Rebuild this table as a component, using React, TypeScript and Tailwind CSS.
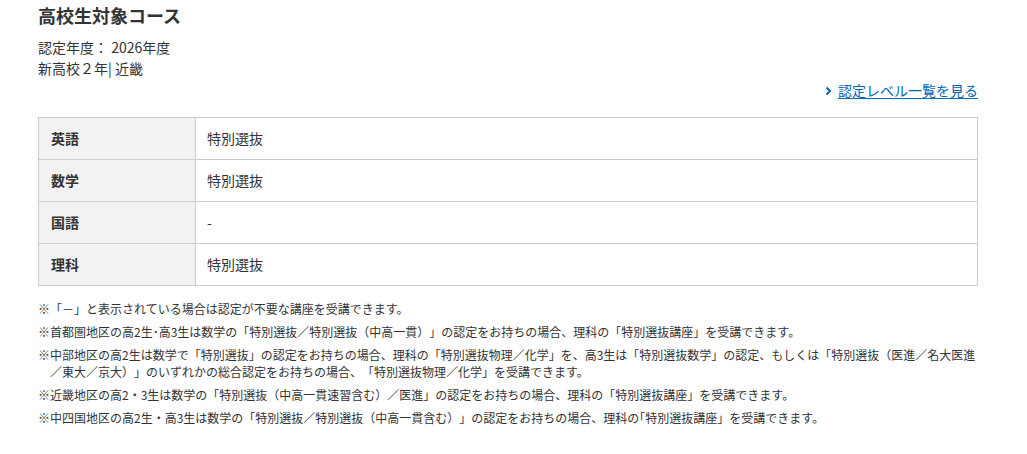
import React from 'react'

const rows = [
  { subject: '英語', level: '特別選抜' },
  { subject: '数学', level: '特別選抜' },
  { subject: '国語', level: '-' },
  { subject: '理科', level: '特別選抜' },
]

const notes: React.ReactNode[] = [
  '※「－」と表示されている場合は認定が不要な講座を受講できます。',
  '※首都圏地区の高2生･高3生は数学の「特別選抜／特別選抜（中高一貫）」の認定をお持ちの場合、理科の「特別選抜講座」を受講できます。',
  <>
    ※中部地区の高2生は数学で「特別選抜」の認定をお持ちの場合、理科の「特別選抜物理／化学」を、高3生は「特別選抜数学」の認定、もしくは「特別選抜（医進／名大医進
    <br />
    ／東大／京大）」のいずれかの総合認定をお持ちの場合、「特別選抜物理／化学」を受講できます。
  </>,
  '※近畿地区の高2・3生は数学の「特別選抜（中高一貫速習含む）／医進」の認定をお持ちの場合、理科の「特別選抜講座」を受講できます。',
  '※中四国地区の高2生・高3生は数学の「特別選抜／特別選抜（中高一貫含む）」の認定をお持ちの場合、理科の｢特別選抜講座」を受講できます。',
]

export default function App() {
  return (
    <div
      className="min-h-[454px] bg-white text-[#333333] [text-spacing-trim:space-all]"
      style={{ fontFamily: '"Noto Sans CJK JP", "Noto Sans", sans-serif' }}
    >
      <div className="ml-[38px] w-[940px]">
        <h1 className="pt-[2px] text-[18px] font-bold leading-[27px]">高校生対象コース</h1>

        <div className="mt-[8px] text-[14px] leading-[21px]">
          <p>認定年度： 2026年度</p>
          <p>新高校２年| 近畿</p>
        </div>

        <div className="mt-[1px] flex justify-end text-[14px] leading-[21px]">
          <a href="#" className="flex items-center gap-[6px] text-[#0068b7] underline underline-offset-2">
            <svg width="7" height="10" viewBox="0 0 7 10" className="shrink-0">
              <polyline points="1.5,1.5 5,5 1.5,8.5" fill="none" stroke="#0068b7" strokeWidth="2" />
            </svg>
            認定レベル一覧を見る
          </a>
        </div>

        <table className="mt-[16px] w-full border-collapse text-[14px]">
          <tbody>
            {rows.map((row) => (
              <tr key={row.subject} className="h-[42px]">
                <th className="w-[157px] border border-[#cccccc] bg-[#f2f2f2] px-[12px] text-left font-bold">
                  {row.subject}
                </th>
                <td className="border border-[#cccccc] px-[11px]">{row.level}</td>
              </tr>
            ))}
          </tbody>
        </table>

        <div className="mt-[14px] text-[12px] leading-[17px]">
          {notes.map((note, i) => (
            <p key={i} className="mb-[6px] pl-[12px] -indent-[12px]">
              {note}
            </p>
          ))}
        </div>
      </div>
    </div>
  )
}
